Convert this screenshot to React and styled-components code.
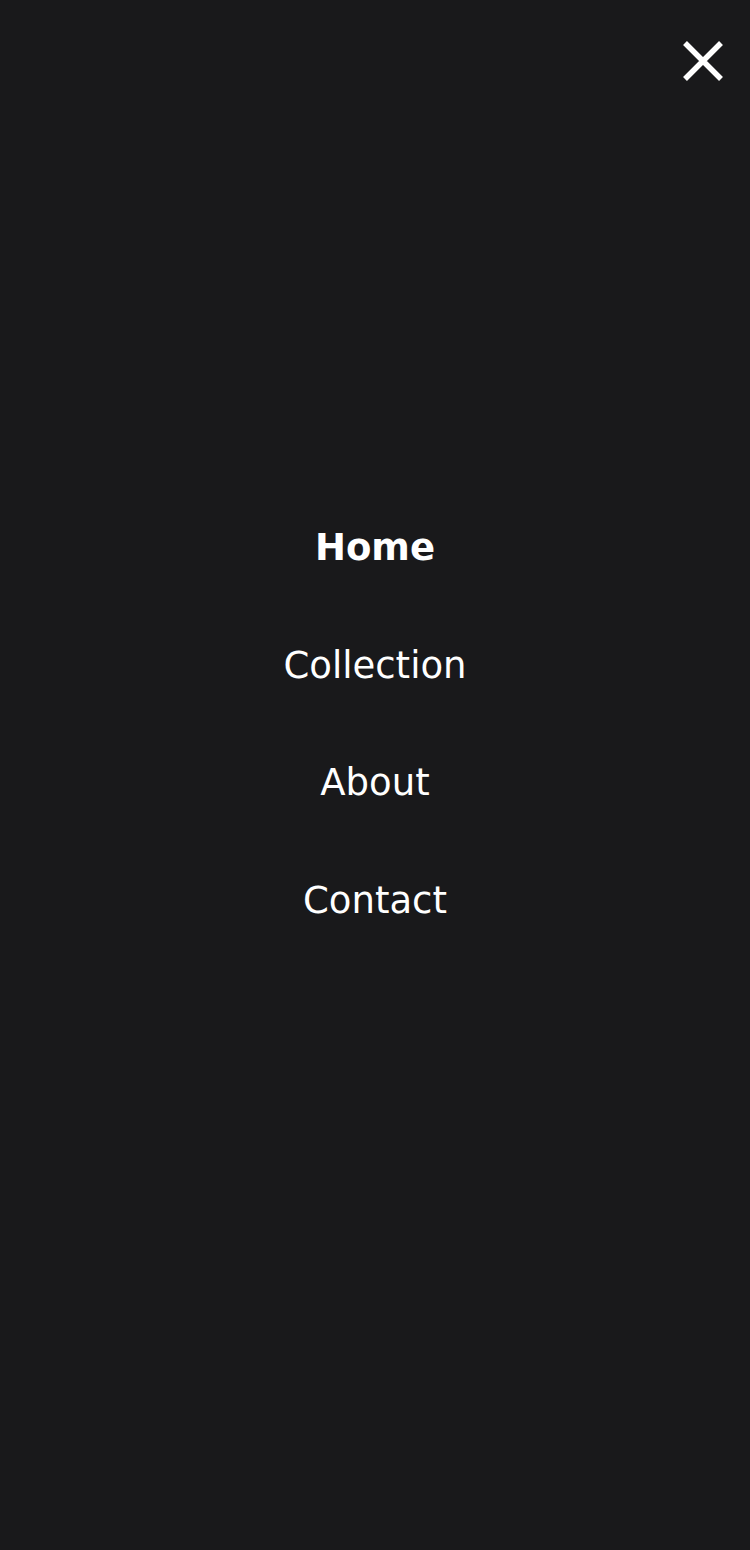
import styled, { createGlobalStyle } from "styled-components";

const GlobalStyle = createGlobalStyle`
  html, body {
    margin: 0;
    padding: 0;
    background: #19191b;
  }
  body {
    font-family: "DejaVu Sans", "Liberation Sans", sans-serif;
    color: #ffffff;
  }
`;

const links = [
  { label: "Home", active: true },
  { label: "Collection" },
  { label: "About" },
  { label: "Contact" },
];

export default function App() {
  return (
    <>
      <GlobalStyle />
      <Overlay>
        <TopBar>
          <CloseButton aria-label="Close menu">
            <svg width="44" height="44" viewBox="0 0 44 44">
              <path
                d="M4 4 L40 40 M40 4 L4 40"
                stroke="#fff"
                strokeWidth="5.5"
                fill="none"
              />
            </svg>
          </CloseButton>
        </TopBar>
        <Nav>
          {links.map((l) => (
            <NavLink key={l.label} href="#" $active={l.active}>
              {l.label}
            </NavLink>
          ))}
        </Nav>
      </Overlay>
    </>
  );
}

const Overlay = styled.div`
  width: 750px;
  height: 1550px;
  background: #19191b;
  display: flex;
  flex-direction: column;
`;

const TopBar = styled.div`
  display: flex;
  justify-content: flex-end;
  padding: 39px 25px 0 0;
`;

const CloseButton = styled.button`
  background: none;
  border: 0;
  padding: 0;
  width: 44px;
  height: 44px;
  cursor: pointer;
  display: flex;
`;

const Nav = styled.nav`
  display: flex;
  flex-direction: column;
  align-items: center;
  padding-top: 437px;
`;

const NavLink = styled.a`
  display: block;
  height: 117.5px;
  line-height: 56px;
  font-size: 37px;
  font-weight: ${(p) => (p.$active ? 700 : 400)};
  color: #ffffff;
  text-decoration: none;
`;
